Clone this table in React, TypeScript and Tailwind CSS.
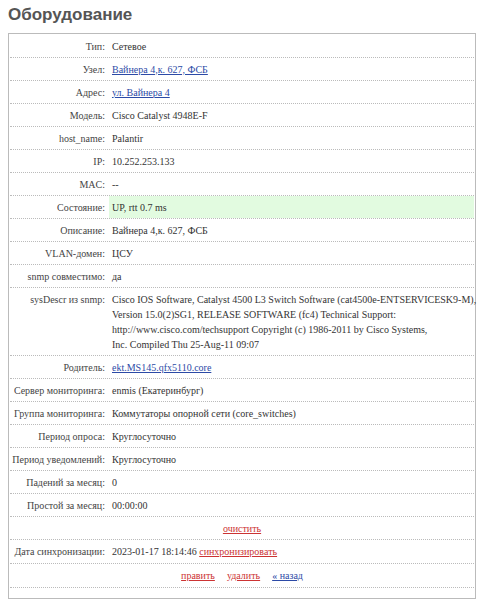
import React from "react";

type Row = { label: string; value: React.ReactNode; ok?: boolean };

const Blue = ({ children }: { children: React.ReactNode }) => (
  <a href="#" className="text-[#2c4aa6] underline">{children}</a>
);

const Red = ({ children }: { children: React.ReactNode }) => (
  <a href="#" className="text-[#cc3333] underline">{children}</a>
);

const sysDescr = [
  "Cisco IOS Software, Catalyst 4500 L3 Switch Software (cat4500e-ENTSERVICESK9-M),",
  "Version 15.0(2)SG1, RELEASE SOFTWARE (fc4) Technical Support:",
  "http://www.cisco.com/techsupport Copyright (c) 1986-2011 by Cisco Systems,",
  "Inc. Compiled Thu 25-Aug-11 09:07",
];

const rows: Row[] = [
  { label: "Тип:", value: "Сетевое" },
  { label: "Узел:", value: <Blue>Вайнера 4,к. 627, ФСБ</Blue> },
  { label: "Адрес:", value: <Blue>ул. Вайнера 4</Blue> },
  { label: "Модель:", value: "Cisco Catalyst 4948E-F" },
  { label: "host_name:", value: "Palantir" },
  { label: "IP:", value: "10.252.253.133" },
  { label: "MAC:", value: "--" },
  { label: "Состояние:", value: "UP, rtt 0.7 ms", ok: true },
  { label: "Описание:", value: "Вайнера 4,к. 627, ФСБ" },
  { label: "VLAN-домен:", value: "ЦСУ" },
  { label: "snmp совместимо:", value: "да" },
  {
    label: "sysDescr из snmp:",
    value: sysDescr.map((line) => (
      <div key={line} className="whitespace-nowrap">{line}</div>
    )),
  },
  { label: "Родитель:", value: <Blue>ekt.MS145.qfx5110.core</Blue> },
  { label: "Сервер мониторинга:", value: "enmis (Екатеринбург)" },
  { label: "Группа мониторинга:", value: "Коммутаторы опорной сети (core_switches)" },
  { label: "Период опроса:", value: "Круглосуточно" },
  { label: "Период уведомлений:", value: "Круглосуточно" },
  { label: "Падений за месяц:", value: "0" },
  { label: "Простой за месяц:", value: "00:00:00" },
];

export default function App() {
  return (
    <div className="min-h-screen bg-white px-2 pt-[4px] font-['Liberation_Serif',serif] text-[10px] leading-[15px] text-[#333]">
      <h1 className="mb-[7px] font-['Liberation_Sans',Arial,sans-serif] text-[17px] font-bold leading-[22px] text-[#555]">
        Оборудование
      </h1>

      <div className="w-[468px] border border-[#bbb] px-px pt-px pb-[10px]">
        {rows.map(({ label, value, ok }) => (
          <div key={label} className="flex border-b border-dotted border-[#bbb]">
            <div className="w-[99px] shrink-0 py-[3.5px] pr-[4px] text-right text-[#444]">{label}</div>
            <div className={`min-w-0 flex-1 py-[3.5px] pl-[3px] ${ok ? "bg-[#e2fbe0]" : ""}`}>{value}</div>
          </div>
        ))}

        <div className="border-b border-dotted border-[#bbb] py-[3.5px] text-center">
          <Red>очистить</Red>
        </div>

        <div className="flex border-b border-dotted border-[#bbb]">
          <div className="w-[99px] shrink-0 py-[3.5px] pr-[4px] text-right text-[#444]">Дата синхронизации:</div>
          <div className="flex-1 py-[4px] pl-[3px]">
            2023-01-17 18:14:46 <Red>синхронизировать</Red>
          </div>
        </div>

        <div className="flex justify-center gap-[12px] border-b border-dotted border-[#bbb] py-[4px]">
          <Red>править</Red>
          <Red>удалить</Red>
          <Blue>« назад</Blue>
        </div>
      </div>
    </div>
  );
}
